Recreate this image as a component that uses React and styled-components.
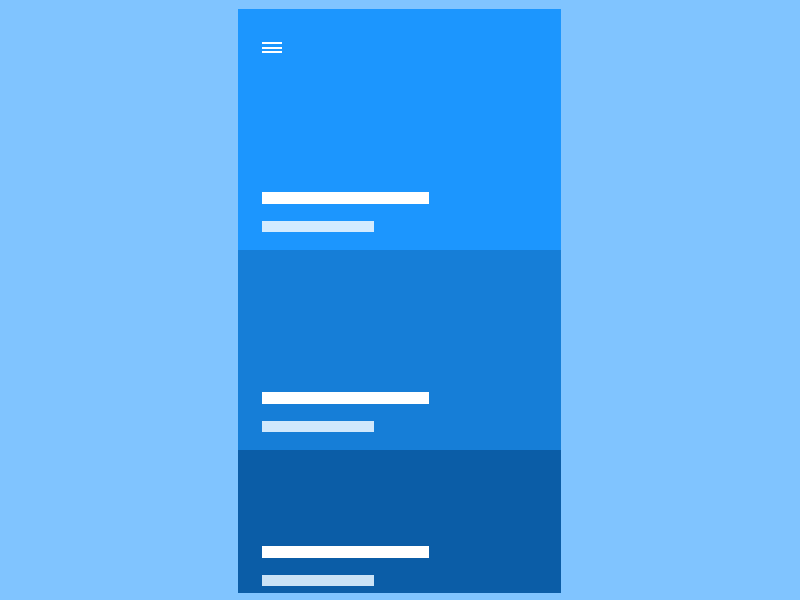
import React from "react";
import styled, { createGlobalStyle } from "styled-components";

const GlobalStyle = createGlobalStyle`
  html, body {
    margin: 0;
    padding: 0;
    background: #80c4ff;
    font-family: "Liberation Sans", Arial, sans-serif;
  }
`;

const Page = styled.div`
  width: 800px;
  height: 600px;
  padding: 9px 0 0 238px;
  box-sizing: border-box;
`;

const Phone = styled.div`
  width: 323px;
  height: 584px;
  display: flex;
  flex-direction: column;
  overflow: hidden;
`;

const Card = styled.section`
  flex: ${(p) => (p.$height ? `0 0 ${p.$height}px` : "1 1 auto")};
  background: ${(p) => p.$bg};
  box-sizing: border-box;
  padding: ${(p) => p.$top}px 24px ${(p) => p.$bottom}px;
  display: flex;
  flex-direction: column;
  justify-content: ${(p) => (p.$top ? "space-between" : "flex-end")};
`;

const MenuButton = styled.button`
  width: 20px;
  height: 11.5px;
  padding: 0;
  border: 0;
  background: transparent;
  display: flex;
  flex-direction: column;
  justify-content: space-between;
  cursor: pointer;
`;

const MenuLine = styled.span`
  display: block;
  height: 2.4px;
  background: #ffffff;
`;

const Caption = styled.div`
  display: flex;
  flex-direction: column;
  gap: 17px;
`;

const Title = styled.div`
  width: 167px;
  height: 12px;
  background: #ffffff;
`;

const Subtitle = styled.div`
  width: 112px;
  height: 11px;
  background: ${(p) => p.$tint};
`;

const cards = [
  { bg: "#1c96fe", tint: "#d3ebff", height: 241, top: 33, bottom: 18, menu: true },
  { bg: "#167ed7", tint: "#d0e8fc", height: 200, top: 0, bottom: 18 },
  { bg: "#0b5da7", tint: "#cae2f6", top: 0, bottom: 7 },
];

export default function App() {
  return (
    <>
      <GlobalStyle />
      <Page>
        <Phone>
          {cards.map((c, i) => (
            <Card key={i} $bg={c.bg} $height={c.height} $top={c.top} $bottom={c.bottom}>
              {c.menu && (
                <MenuButton aria-label="Menu">
                  <MenuLine />
                  <MenuLine />
                  <MenuLine />
                </MenuButton>
              )}
              <Caption>
                <Title />
                <Subtitle $tint={c.tint} />
              </Caption>
            </Card>
          ))}
        </Phone>
      </Page>
    </>
  );
}
